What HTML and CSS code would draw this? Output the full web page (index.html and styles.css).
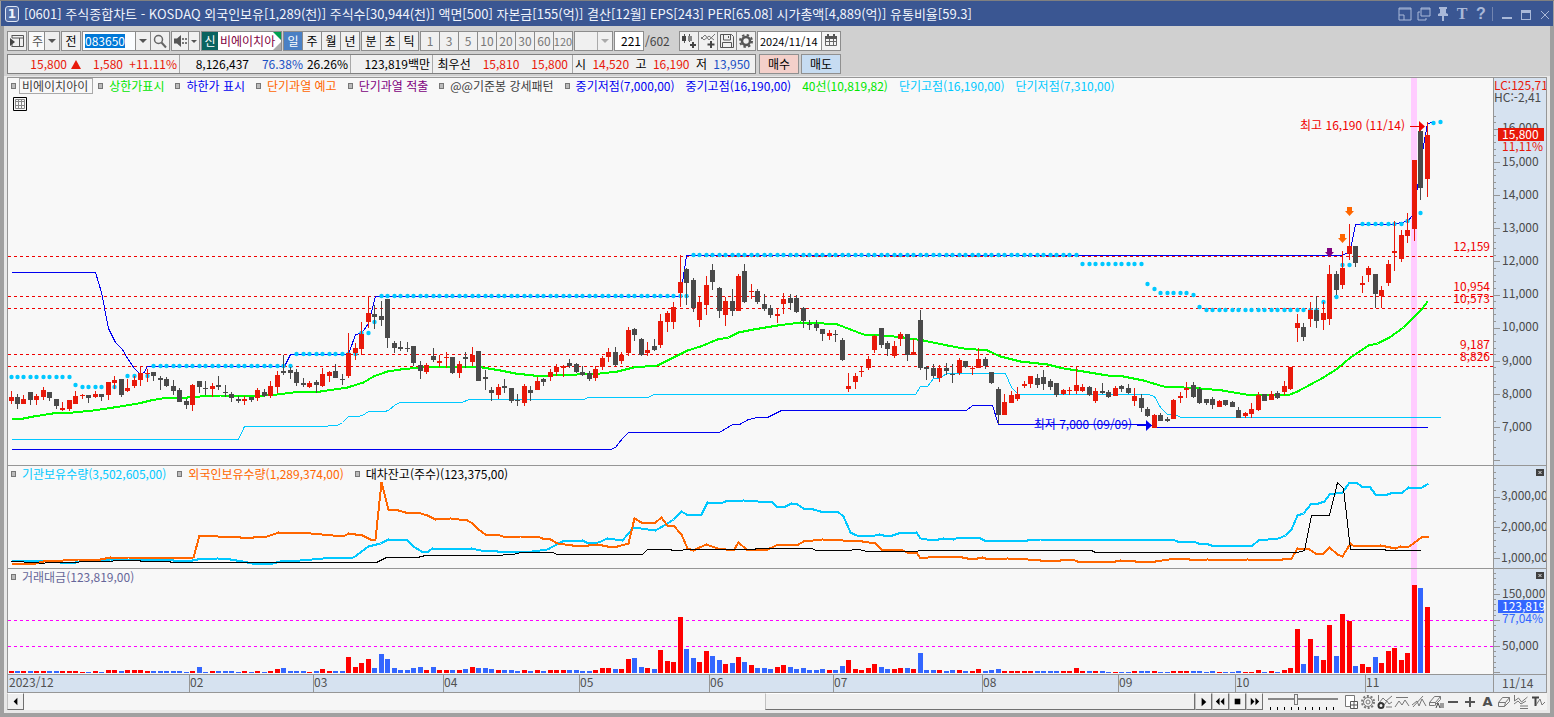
FILE: index.html
```html
<!DOCTYPE html>
<html lang="ko">
<head>
<meta charset="utf-8">
<title>[0601] 주식종합차트</title>
<link rel="stylesheet" href="styles.css">
</head>
<body>
<div class="window">
  <header class="titlebar">
    <span class="win-no">1</span>
    <h1 class="title">[0601] 주식종합차트 - KOSDAQ 외국인보유[1,289(천)] 주식수[30,944(천)] 액면[500] 자본금[155(억)] 결산[12월] EPS[243] PER[65.08] 시가총액[4,889(억)] 유통비율[59.3]</h1>
    <div class="win-buttons">
      <button aria-label="화면 분할"><svg viewBox="0 0 14 14"><path d="M1 1h12v12H1zM1 8h5v5M1 2h12" fill="none" stroke="currentColor"/></svg></button>
      <button aria-label="복사"><svg viewBox="0 0 14 14"><path d="M4 1h9v8H4zM4 2h9M3 5H1v8h8v-2" fill="none" stroke="currentColor"/></svg></button>
      <button aria-label="고정"><svg viewBox="0 0 14 14"><path d="M3 0h8v2h-1v4l2 1v2H8v5H6V9H2V7l2-1V2H3z" fill="currentColor"/></svg></button>
      <button aria-label="글꼴" class="glyph">T</button>
      <button aria-label="도움말" class="glyph q">?</button>
      <i class="split"></i>
      <button aria-label="최소화"><svg viewBox="0 0 14 14"><path d="M2 10h10v2H2z" fill="currentColor"/></svg></button>
      <button aria-label="최대화"><svg viewBox="0 0 14 14"><path d="M2 3h10v10H2z M3 6v6h8V6z" fill="currentColor" fill-rule="evenodd"/></svg></button>
      <button aria-label="닫기"><svg viewBox="0 0 14 14"><path d="M3 4l8 8M11 4l-8 8" stroke="currentColor"/></svg></button>
    </div>
  </header>

  <div class="frame">
    <div class="toolbar">
      <div class="row">
        <div class="group"><button class="tool" aria-label="종목창"><svg viewBox="0 0 16 16"><path d="M3 2.5h11.500v11H3M3 2v3M3 11v3M3 5h11M10.500 5v9" fill="none" stroke="#555"/><path d="M1 5l5 4-5 4z" fill="#444"/></svg></button></div>
        <div class="group combo kind"><select aria-label="구분"><option>주</option></select><span class="arrow"></span></div>
        <div class="group"><button class="tool">전</button></div>
        <div class="group combo code"><input type="text" id="code" aria-label="종목코드" value="083650"><span class="arrow"></span><button class="tool" aria-label="검색"><svg viewBox="0 0 16 16"><circle cx="6.500" cy="6.500" r="4" fill="none" stroke="#666" stroke-width="1.500"/><path d="M9.500 9.500l4.500 5" stroke="#666" stroke-width="2"/></svg></button></div>
        <div class="group"><button class="tool speaker" aria-label="음성"><svg viewBox="0 0 16 16"><path d="M2 5.500h3L9 2v12l-4-3.500H2z" fill="#555"/><path d="M11 5v6M14 5v6" stroke="#777" stroke-width="2" stroke-dasharray="2 2"/></svg></button><span class="arrow narrow"></span></div>
        <div class="group stock"><span class="margin">신</span><span class="name">비에이치아</span></div>
        <div class="group periods"><button class="tool on">일</button><button class="tool">주</button><button class="tool">월</button><button class="tool">년</button></div>
        <div class="group periods"><button class="tool">분</button><button class="tool">초</button><button class="tool">틱</button></div>
        <div class="group minutes"><button class="tool">1</button><button class="tool">3</button><button class="tool">5</button><button class="tool">10</button><button class="tool">20</button><button class="tool">30</button><button class="tool">60</button><button class="tool">120</button></div>
        <div class="group combo blank"><select aria-label="사용자 주기" disabled><option></option></select><span class="arrow off"></span></div>
        <div class="group count"><input type="text" aria-label="조회 봉수" value="221"></div>
        <span class="total">/602</span>
        <div class="group icons">
          <button class="tool" aria-label="종목 추가"><svg viewBox="0 0 16 16"><path d="M3.500 1v9M8.500 1v8" stroke="#555"/><path d="M1 3h4v5H1z" fill="#444"/><path d="M7 3h4v5H7z" fill="#888"/><path d="M12 9v6M9 12h6" stroke="#444" stroke-width="2"/></svg></button>
          <button class="tool" aria-label="지표 추가"><svg viewBox="0 0 16 16"><path d="M1 6l4-4 4 5 6-6M1 4l3 3 5-4 5 4" fill="none" stroke="#777"/><path d="M11 8v7M7.500 11.500h7" stroke="#444" stroke-width="2"/></svg></button>
          <button class="tool" aria-label="저장"><svg viewBox="0 0 16 16"><path d="M1.500 1.500h11l2 2v11h-13zM4.500 2v5h7V2M3.500 14V9.500h9V14M9.500 3v2" fill="none" stroke="#555"/></svg></button>
          <button class="tool" aria-label="설정"><svg viewBox="0 0 16 16"><circle cx="8" cy="8" r="4" fill="none" stroke="#555" stroke-width="2.500"/><circle cx="8" cy="8" r="6" fill="none" stroke="#555" stroke-width="2" stroke-dasharray="2.400 2.310"/></svg></button>
        </div>
        <div class="group date"><input type="text" aria-label="기준일" value="2024/11/14"><button class="tool" aria-label="달력"><svg viewBox="0 0 16 16"><path d="M2.500 3.500h11v9h-11zM6.500 4v8M10.500 4v8M3 8.500h10" fill="none" stroke="#666"/><path d="M2 3h12v3H2zM4 1h2v3H4zM10 1h2v3h-2z" fill="#555"/></svg></button></div>
      </div>

      <div class="row">
        <div class="quote">
          <div class="cell c1 up"><span>15,800</span><i class="tri"></i><span class="diff">1,580</span><span class="rate">+11.11%</span></div>
          <div class="cell c2"><span>8,126,437</span><span class="down turn">76.38%</span><span class="share">26.26%</span></div>
          <div class="cell c3"><span>123,819백만</span></div>
          <div class="cell c4"><span>최우선</span><span class="up">15,810</span><span class="up">15,800</span></div>
          <div class="cell c5"><span>시</span><span class="up">14,520</span><span>고</span><span class="up">16,190</span><span>저</span><span class="down">13,950</span></div>
        </div>
        <button class="order buy">매수</button>
        <button class="order sell">매도</button>
      </div>
    </div>

    <main class="workspace">
      <section class="chart">
        <div class="pane" id="price">
          <svg class="plot"></svg>
          <div class="legend">
            <span class="key gray"><span class="boxed">비에이치아이</span></span>
            <span class="key lime">상한가표시</span>
            <span class="key blue">하한가 표시</span>
            <span class="key orange">단기과열 예고</span>
            <span class="key purple">단기과열 적출</span>
            <span class="key gray">@@기준봉 강세패턴</span>
            <span class="key blue">중기저점(7,000,00)</span>
            <span class="blue">중기고점(16,190,00)</span>
            <span class="lime">40선(10,819,82)</span>
            <span class="cyan">단기고점(16,190,00)</span>
            <span class="cyan">단기저점(7,310,00)</span>
          </div>
          <button class="grid-btn" aria-label="데이터 표"><svg viewBox="0 0 14 14"><path d="M.500.500h13v13H.500z" fill="#f8f8f8" stroke="#000"/><path d="M2.500 2.500h9v9h-9zM5.500 2v10M8.500 2v10M2 4.500h10M2 8.500h10" fill="none" stroke="#888"/></svg></button>
        </div>
        <div class="axis"><svg class="scale"></svg></div>

        <div class="pane" id="holding">
          <svg class="plot"></svg>
          <div class="legend">
            <span class="key cyan">기관보유수량(3,502,605,00)</span>
            <span class="key orange">외국인보유수량(1,289,374,00)</span>
            <span class="key black">대차잔고(주수)(123,375,00)</span>
          </div>
        </div>
        <div class="axis"><svg class="scale"></svg><button class="close" aria-label="보유수량 닫기"><svg viewBox="0 0 8 7"><path d="M2.500 2l3 3M5.500 2l-3 3" stroke="#ddd"/></svg></button></div>

        <div class="pane" id="volume">
          <svg class="plot"></svg>
          <div class="legend"><span class="key slate">거래대금(123,819,00)</span></div>
        </div>
        <div class="axis"><svg class="scale"></svg><button class="close" aria-label="거래대금 닫기"><svg viewBox="0 0 8 7"><path d="M2.500 2l3 3M5.500 2l-3 3" stroke="#ddd"/></svg></button></div>

        <div class="time" id="time"><svg class="plot"></svg></div>
        <div class="time today">11/14</div>
      </section>

      <footer class="footer">
        <button class="nav" aria-label="왼쪽"><svg viewBox="0 0 16 16"><path d="M10 4v8L6 8z"/></svg></button>
        <div class="track"><div class="thumb"></div></div>
        <button class="nav" aria-label="오른쪽"><svg viewBox="0 0 16 16"><path d="M6 4v9l5-4.500z"/></svg></button>
        <button class="nav" aria-label="빠르게 뒤로"><svg viewBox="0 0 16 16"><path d="M7 4v8L3 8zM12 4v8L8 8z"/></svg></button>
        <button class="nav" aria-label="정지"><svg viewBox="0 0 16 16"><path d="M5 5h6v6H5z"/></svg></button>
        <button class="nav" aria-label="빠르게 앞으로"><svg viewBox="0 0 16 16"><path d="M4 4v8l4-4zM9 4v8l4-4z"/></svg></button>
        <input type="range" class="speed" aria-label="재생 속도" min="0" max="10" value="4">
        <div class="draw">
          <button aria-label="화면 추가"><svg viewBox="0 0 16 16"><path d="M2.500 1.500h9v11h-9z" fill="#fff"/><path d="M7.500 7.500h7v7h-7zM11 8v6M8 11h6" fill="#fff" stroke="#555"/></svg></button>
          <button aria-label="설정"><svg viewBox="0 0 16 16"><circle cx="8" cy="8" r="2"/><circle cx="8" cy="8" r="4.500"/><circle cx="8" cy="8" r="6" stroke-width="2" stroke-dasharray="2 1.770"/></svg></button>
          <button aria-label="지표 설정"><svg viewBox="0 0 16 16"><path d="M1.500 1v6M2 9l4-5 3 3 6-5M7 11l3-4 2 3 3-2M9 13h6"/><circle cx="4" cy="11.500" r="2.500" stroke="#333" stroke-width="2"/></svg></button>
          <button aria-label="수평선"><svg viewBox="0 0 16 16"><path d="M2 3.500h12M1 13l4-6 3 4 3-5 4 6"/></svg></button>
          <button aria-label="추세선"><svg viewBox="0 0 16 16"><path d="M2 13L12 2M1 11l5-4 2 5 3-7 4 7"/></svg></button>
          <button aria-label="전체 지우기"><svg viewBox="0 0 16 16"><path d="M1.500 8.500l5-6h6l-5 6zM1.500 8.500v3h5l6-6v-3M7.500 8.500v3"/><path d="M8 14l2-5 2 5M13 9v5M15 9v5" stroke="#444"/></svg></button>
          <button aria-label="축소"><svg viewBox="0 0 16 16"><path d="M3 8h10" stroke="#555" stroke-width="2"/></svg></button>
          <button aria-label="확대"><svg viewBox="0 0 16 16"><path d="M3 8h10M8 3v10" stroke="#555" stroke-width="2"/></svg></button>
          <button aria-label="자동" class="letter">A</button>
          <button aria-label="지우개"><svg viewBox="0 0 16 16"><path d="M2.500 8.500l4-5h7l-4 5zM2.500 8.500v4h6l5-5v-4M9.500 8.500l-1 4"/></svg></button>
          <button aria-label="분석"><svg viewBox="0 0 16 16"><path d="M1.500 1v6l4-3 3 4 6-5M1 10l4-3 3 3 5-3M7 12h8M7 14.500h8"/></svg></button>
          <button aria-label="글자 입력"><svg viewBox="0 0 16 16"><path d="M2 3.500h7M5.500 3v9" stroke="#444" stroke-width="2"/><path d="M6 11l4-6 2 6 3-3"/></svg></button>
        </div>
      </footer>
    </main>
  </div>
</div>
<script src="chart.js"></script>
</body>
</html>
```

FILE: styles.css
```css
*, *::before, *::after { box-sizing: border-box; }

body {
  margin: 0;
  font: 12px/14px "Noto Sans CJK KR", "Liberation Sans", sans-serif;
  color: #000;
  overflow: hidden;
}

button, input, select {
  font: inherit;
  color: inherit;
  margin: 0;
  padding: 0;
  border: 0;
  border-radius: 0;
  background: none;
  outline: 0;
}

svg { display: block; }

.window {
  height: 100vh;
  display: flex;
  flex-direction: column;
  border-top: 1px solid #808080;
  background: #a0a0a0;
}

/* title bar */
.titlebar {
  flex: none;
  height: 25px;
  margin: 0 1px;
  padding: 0 1px 0 4px;
  display: flex;
  align-items: center;
  background: #3a5692;
  color: #f0f4fc;
}
.win-no {
  width: 14px;
  height: 16px;
  border: 1px solid #e0e6f4;
  border-radius: 3px;
  background: #5670a8;
  font: bold 12px/14px "DejaVu Sans", sans-serif;
  text-align: center;
}
.title {
  flex: 1;
  margin: 0 0 0 5px;
  font-size: 13px;
  line-height: 20px;
  font-weight: 400;
  white-space: nowrap;
}
.win-buttons {
  display: flex;
  align-items: center;
  gap: 5px;
  color: #a9b8d8;
}
.win-buttons button { width: 14px; height: 14px; }
.win-buttons .glyph { font: bold 16px/14px "Liberation Serif", serif; }
.win-buttons .q { font-family: "Liberation Sans", sans-serif; }
.split { width: 1px; height: 14px; background: #7285b0; margin: 0 2px 0 -1px; }

.frame {
  flex: 1;
  min-height: 0;
  display: flex;
  flex-direction: column;
  border: solid #a0a0a0;
  border-width: 0 4px 4px;
}

/* tool bar */
.toolbar {
  flex: none;
  display: flex;
  flex-direction: column;
  gap: 3px;
  padding: 5px 3px 2px;
  background: #d0d0d0;
}
.row { display: flex; gap: 1px; height: 20px; white-space: nowrap; }
.group {
  flex: none;
  display: flex;
  border: 1px solid #8c8c8c;
  background: #f0f0f0;
}
.tool {
  width: 18px;
  display: flex;
  align-items: center;
  justify-content: center;
}
.tool svg { width: 16px; height: 16px; }
.group > * + * { border-left: 1px solid #8c8c8c; }
.arrow {
  width: 15px;
  display: flex;
  align-items: center;
  justify-content: center;
}
.arrow::before {
  content: "";
  border: 4px solid transparent;
  border-top: 4px solid #555;
  border-bottom: 0;
}
.arrow.narrow { width: 11px; }
.arrow.narrow::before { border-width: 3px 3px 0; }
.arrow.off::before { border-top-color: #aaa; }
.group select, .group input { appearance: none; min-width: 0; flex: 1; }
.kind { width: 32px; background: #fafafa; }
.kind select { padding-left: 3px; color: #555; }
.kind .arrow { background: #eee; }
.code { width: 88px; }
.code input { background: #fbfdff; padding-left: 2px; }
.code .tool { width: 19px; background: #f0f0f0; }
.code input::selection { background: #0078d7; color: #fff; }
.tool.speaker { width: 16px; }
.stock { width: 81px; overflow: hidden; background: #fff; position: relative; }
.margin { width: 16px; background: #0a6460; color: #fff; text-align: center; line-height: 17px; }
.stock .name { border: 0; padding-left: 2px; color: #800040; line-height: 17px; }
.stock::before, .stock::after {
  content: "";
  position: absolute;
  right: 0;
  border: 4px solid transparent;
}
.stock::before { top: 0; border-color: #00a050 #00a050 transparent transparent; }
.stock::after { bottom: 0; border-color: transparent #aaa #aaa transparent; }
.periods .tool + .tool { width: 19px; }
.periods .on { background: #4a80c4; color: #fff; }
.minutes { color: #777; }
.minutes .tool + .tool { width: 19px; }
.minutes .tool:last-child { font-size: 11px; }
.blank { width: 39px; }
.group.blank .arrow { border-color: #aaa; }
.count { width: 30px; background: #fff; }
.count input { text-align: right; padding-right: 2px; }
.total { width: 33px; line-height: 19px; color: #444; }
.icons .tool + .tool { width: 19px; }
.date { width: 84px; background: #fff; }
.date input { padding-left: 2px; font-size: 11px; }
.date .tool { width: 19px; background: #f4f4f4; }

/* quote bar */
.quote {
  flex: none;
  display: flex;
  width: 749px;
  margin-right: 2px;
  border: 1px solid #808080;
  background: #f0f0f0;
  line-height: 18px;
}
.cell { display: flex; justify-content: flex-end; padding: 0 2px; border-right: 1px solid #a8a8a8; }
.c1 { width: 172px; }
.c2 { width: 171px; }
.c3 { width: 82px; }
.c4 { width: 140px; gap: 12px; padding-right: 4px; }
.c5 { flex: 1; border: 0; justify-content: space-between; padding-right: 5px; }
.tri {
  align-self: center;
  margin-left: 4px;
  border: 5px solid transparent;
  border-top: 0;
  border-bottom: 9px solid #e8190a;
}
.diff { width: 42px; text-align: right; }
.rate { width: 54px; text-align: right; }
.turn { width: 54px; text-align: right; }
.share { width: 45px; text-align: right; }
.up { color: #e8190a; }
.down { color: #1a4fc4; }
.order { width: 40px; border: 1px solid #909090; margin-right: 1px; }
.buy { background: #f4d0ca; }
.sell { background: #c6dcf2; }

/* chart */
.workspace {
  flex: 1;
  min-height: 0;
  display: flex;
  flex-direction: column;
  padding: 1px 3px 3px;
  background: #e8e8e8;
}
.chart {
  flex: 1;
  min-height: 0;
  display: grid;
  grid-template-columns: minmax(0, 1fr) 53px;
  grid-template-rows: minmax(0, 388fr) minmax(0, 103fr) minmax(0, 105fr) 19px;
  border: 1px solid #969696;
  border-bottom: 0;
}
.pane, .axis { position: relative; overflow: hidden; border-bottom: 1px solid #969696; }
.pane { background: #f8f8f8; }
#volume, #volume + .axis { border-bottom: 0; }
.axis, .time { background: #d6e2f0; }
.axis, .today { border-left: 1px solid #969696; }
.plot, .scale { width: 100%; height: 100%; }
.time { border-top: 1px solid #969696; border-bottom: 1px solid #969696; color: #505050; overflow: hidden; }
.today { padding-left: 8px; line-height: 16px; }

svg text { font: 12px "Noto Sans CJK KR", "Liberation Sans", sans-serif; }

.legend {
  position: absolute;
  top: 1px;
  left: 3px;
  display: flex;
  gap: 11px;
  line-height: 14px;
  white-space: nowrap;
}
.key { display: flex; align-items: center; gap: 6px; }
.key::before { content: ""; width: 5px; height: 6px; border: 1px solid #777; background: #bbb; }
.boxed {
  margin: -1px -6px -1px -3px;
  padding: 0 4px 0 2px;
  border: 1px solid #aaa;
}
.lime { color: #00e600; }
.blue { color: #0000f0; }
.orange { color: #ff6600; }
.purple { color: #800080; }
.gray { color: #404040; }
.cyan { color: #00c8ff; }
.black { color: #000; }
.slate { color: #666699; }
.grid-btn { position: absolute; left: 5px; top: 19px; width: 14px; height: 14px; }
.close {
  position: absolute;
  right: 2px;
  top: 3px;
  width: 8px;
  height: 7px;
  background: #404040;
}

/* scroll bar and drawing tools */
.footer {
  flex: none;
  display: flex;
  height: 17px;
  background: #f2f2f2;
}
.nav {
  flex: none;
  width: 17px;
  border: 1px solid;
  border-color: #fff #707070 #707070 #c0c0c0;
  background: #f0f0f0;
}
.nav svg { width: 15px; height: 15px; }
.track { flex: 1; display: flex; justify-content: flex-end; background: #f6f6f6; }
.thumb { width: 36.7%; border: 1px solid; border-color: #fff #707070 #707070 #c0c0c0; background: #f0f0f0; }
.speed {
  appearance: none;
  flex: none;
  width: 70px;
  height: 17px;
  margin: 0 5px;
  background:
    linear-gradient(#888, #888) 0 5px / 100% 2px no-repeat,
    repeating-linear-gradient(90deg, #000 0 1px, transparent 1px 7px) 2px 14px / 66px 3px no-repeat;
}
.speed::-webkit-slider-thumb {
  appearance: none;
  width: 4px;
  height: 11px;
  margin-top: -5px;
  background: #f0f0f0;
  border: 1px solid #777;
}
.draw { flex: none; display: flex; }
.draw button { width: 17px; }
.draw svg { width: 16px; height: 16px; fill: none; stroke: #777; }
.draw .letter { font: bold 13px/17px "DejaVu Sans", sans-serif; color: #505050; }
```

FILE: chart.js
```js
// Daily bars: colour (R rise, K fall), then the heights of high, body top, body bottom and low.
const CANDLES = `R391,397,401,404 K394,397,404,409 R395,399,404,404 K392,392,400,405 R394,396,400,405 R387,390,397,400
K392,392,398,401 K399,399,406,409 R402,408,410,411 R400,400,409,411 R391,396,404,404 R394,395,396,399 K395,395,398,403
R391,394,397,398 K394,394,397,401 R382,382,395,400 R376,380,383,389 K379,379,395,397 R379,388,391,392 R376,380,386,388
R366,373,380,386 R369,373,374,382 K372,372,376,381 K376,378,380,390 K377,379,386,387 K380,386,391,395 K388,390,402,402
K399,401,405,409 R384,385,405,411 K381,381,387,393 K381,388,389,395 R383,386,389,397 K376,385,387,390 K385,392,393,397
K392,394,398,402 K396,399,401,403 R396,399,401,405 K397,397,400,402 R388,390,398,401 K389,392,396,397 R381,386,396,398
R371,375,387,393 K355,371,373,375 K367,370,373,379 K369,372,383,386 K378,383,385,387 R381,383,387,388 K380,382,385,393
R368,374,386,387 R371,372,376,382 K364,371,378,378 K374,379,380,385 R333,353,376,378 R343,348,353,360 R322,334,349,355
R296,313,322,328 K305,314,317,329 K301,316,320,326 K299,299,338,348 K341,343,348,353 K341,347,349,351 K342,348,349,352
K346,346,363,366 K361,365,371,379 R363,365,372,374 K348,356,360,362 R355,361,363,367 R352,357,358,368 K357,357,373,374
R361,364,373,378 K352,357,359,368 R347,355,362,366 K351,351,381,381 K370,377,379,390 K387,390,393,401 R384,387,395,399
K379,386,388,393 K388,388,401,403 K394,400,401,406 R384,386,403,406 K386,390,393,401 R377,381,390,390 K378,379,382,386
R369,372,377,381 R364,367,372,376 R365,366,368,377 K359,363,366,368 K363,364,372,373 K366,372,375,376 K371,373,379,381
R366,369,378,381 R356,358,367,370 R348,352,357,362 K347,352,365,366 R352,355,361,364 R327,330,353,356 K328,329,335,341
K338,339,355,356 R342,350,353,356 K339,346,350,351 R314,321,345,348 R311,313,322,332 R302,307,322,329 R255,282,293,307
K268,269,283,305 K278,280,308,312 R296,302,320,327 R276,285,305,315 K264,270,282,290 K287,288,311,318 R297,301,315,326
K289,301,311,316 R274,276,311,311 K264,271,302,303 R284,291,292,299 K289,291,302,304 K294,304,309,311 K305,308,315,318
R308,314,316,323 R293,299,304,314 K294,298,303,310 K295,298,312,313 K307,308,321,328 K320,324,325,330 K320,324,328,331
K329,329,334,341 R330,333,336,340 K330,334,335,342 K338,340,360,361 R373,386,389,392 R373,376,382,389 R366,371,372,377
R356,359,368,370 R335,336,350,353 K328,328,345,348 K341,343,349,356 R341,346,356,358 R332,334,339,346 K334,334,355,361
R339,352,355,355 K310,320,368,370 K366,367,369,380 K364,368,376,378 R365,368,378,382 K363,368,371,375 K364,374,375,383
R358,360,373,375 K361,361,367,368 R366,368,369,375 R348,359,368,368 K357,359,366,369 K372,372,383,384 K387,389,415,424
R394,402,415,415 R391,395,403,403 R387,394,399,401 R381,384,386,388 R376,376,384,388 K374,378,385,388 K370,377,384,390
K379,381,387,390 K383,383,395,397 R389,390,394,395 R387,390,391,395 R366,385,391,394 R384,387,391,392 K386,387,395,396
R388,391,401,403 K383,391,393,394 K390,392,397,398 R386,388,396,396 K385,386,389,392 K384,388,393,394 R388,396,401,406
K394,398,408,412 K407,409,416,417 R414,415,428,428 K413,415,421,421 K417,419,421,422 R399,400,419,419 R392,396,398,403
R382,388,390,398 K382,385,397,398 K387,389,403,404 K399,399,403,405 K397,399,405,409 R400,401,407,407 K400,400,405,406
K401,402,407,407 K407,410,418,418 R412,413,416,418 R403,409,414,418 R392,395,410,411 K394,394,401,401 R391,394,400,400
K391,393,398,399 R381,386,392,395 R367,367,389,390 R314,323,328,342 K323,327,337,341 R302,310,319,327 K296,310,321,328
R302,313,320,330 R265,274,319,325 K271,274,290,295 R251,268,285,289 R224,246,254,260 K246,246,263,267 R276,283,285,293
R266,268,275,282 K274,274,294,308 R286,290,296,308 R260,264,283,286 R221,251,253,271 R230,235,259,262 R213,230,236,243
R160,160,229,241 K125,131,188,200 R122,135,179,197`.split(/\s+/);

// Turnover bars: colour and height.
const TURNOVER = `R2 B2 R2 B2 R2 R2 B2 B2 R2 R2 R2 R1 B1 R2 B1 R3 R3 B2 R3 R3 R3 R2 B2 B2 B2 B2 B2 B1 R2 B6 B1 R2 B2 B2 B2 B1 R2 B1 R2 B1
R2 R4 B5 B2 B2 B2 R1 B2 R4 R2 B2 B2 R16 R6 R10 R14 B5 B19 B14 B5 B3 B3 B5 B6 R3 B6 R3 R3 B3 R3 B4 R6 B5 B5 B4 R3 B3 B3 B2 R3
B2 R3 B2 R3 R3 R3 B3 B3 B2 B2 R3 R5 R5 B4 R4 R14 B15 B6 R5 B4 R23 R12 R11 R56 B24 B15 R11 R22 B17 B13 R9 B10 R16 B11 R8 B5 B5 B4 R6 R8
B6 B4 B5 B3 B3 B4 R3 B3 B7 R13 R4 R3 R5 R9 B6 B4 R4 R5 B5 R4 B20 B3 B3 R3 B2 B3 R3 B2 R2 R4 B2 B3 B4 R2 R2 R2 R2 R2 B2 B2
B2 B2 R2 R2 R5 R2 B2 R2 B2 B1 R1 B1 B1 R2 B2 B2 R2 B1 B1 R2 R2 R2 B2 B2 B1 B2 R1 B1 B1 B2 R1 R1 R3 B1 R2 B1 R3 R5 R44 B9
R34 B17 R13 R48 B17 R59 R52 B7 R9 R6 B16 R10 R22 R25 R13 R20 R88 B85 R66`.split(/\s+/);

// Short-term high markers: first bar, last bar, height.
const DOTS = [[0,9,377],[10,10,385],[11,14,387],[16,16,387],[18,19,376],[21,21,376],[22,43,366],[44,53,354],[54,55,333],[56,56,322],
  [57,104,296],[105,164,255],[165,174,264],[175,175,284],[176,176,289],[177,181,293],[182,182,295],[183,183,307],[184,201,310],
  [202,202,302],[204,204,297],[205,206,265],[208,214,224],[215,215,221],[217,217,213],[219,219,123],[220,220,122]];

const MID_HIGH = "11,272 95,272 101,292 108,328 115,342 122,349 127,358 134,368 140,374 143,373 147,366 284,366 290,354 348,354 355,334 361,333 368,323 375,296 680,296 682,282 686,255 1341,255 1348,252 1351,244 1355,224 1393,224 1400,222 1407,221 1412,215 1417,187 1423,145 1427,123 1432,122";
const MID_LOW = "11,449 610,449 615,447 622,438 628,432 719,432 732,424 739,424 748,419 757,417 767,417 777,412 781,410 966,410 972,405 992,405 998,424 1150,424 1155,427 1427,427";
const SHORT_LOW = "11,439 238,439 244,426 318,426 337,425 342,422 348,416 357,416 362,415 368,411 384,411 388,410 395,404 400,402 461,402 469,399 583,399 588,397 648,397 653,394 915,394 920,386 927,386 933,378 939,378 946,373 1005,373 1011,387 1018,394 1148,394 1154,396 1160,407 1167,414 1175,414 1180,417 1440,417";
const MA40 = "11,418 23,418 33,416 52,413 73,412 93,410 113,407 138,403 150,400 167,397 187,397 200,396 220,395 240,395 253,396 277,394 300,391 320,391 347,387 363,382 373,376 387,371 400,369 420,367 450,366 482,367 500,370 515,373 533,375 550,375 577,374 600,373 617,371 633,367 657,365 673,357 687,350 700,346 717,339 728,337 738,332 753,329 777,325 800,322 823,323 837,324 850,329 863,334 883,335 903,337 923,340 947,345 963,348 987,350 1000,356 1020,361 1047,364 1063,368 1077,370 1107,375 1123,376 1143,380 1163,386 1183,387 1200,388 1222,390 1245,394 1287,395 1297,391 1310,384 1323,377 1337,368 1350,357 1368,345 1377,343 1389,337 1403,327 1413,317 1422,308 1427,301";
const INSTITUTION = "11,560 40,560 60,562 75,562 82,560 110,559 133,559 153,559 173,560 192,560 197,559 217,558 230,559 242,561 252,563 272,563 280,561 300,560 323,558 353,557 368,546 380,543 388,539 407,540 413,546 421,551 428,551 432,548 463,549 471,548 480,550 497,551 520,551 532,551 547,549 562,541 582,540 588,543 598,542 607,538 622,540 633,527 655,530 667,523 673,519 681,511 686,514 701,514 707,502 720,503 725,501 743,500 772,502 776,506 785,506 791,503 797,504 803,508 813,509 820,511 837,511 843,516 850,532 856,535 870,536 879,534 883,535 892,535 898,533 916,532 920,538 933,540 943,538 953,539 958,537 978,537 984,540 1027,540 1040,539 1172,539 1177,541 1193,541 1198,543 1205,543 1211,545 1252,545 1258,540 1278,538 1285,535 1291,529 1297,515 1303,513 1311,503 1318,503 1324,501 1329,494 1342,492 1349,482 1356,482 1361,486 1369,486 1375,494 1387,494 1390,493 1402,492 1408,487 1420,488 1428,483";
const FOREIGN = "11,563 35,563 43,561 63,560 78,559 100,559 110,557 115,558 128,557 160,557 170,558 193,557 199,535 210,535 217,536 240,537 253,537 267,536 278,532 310,533 343,536 348,533 362,535 370,539 375,539 381,482 388,509 398,510 405,512 417,512 427,515 435,519 450,518 467,520 472,523 478,529 485,534 497,534 505,537 520,536 537,536 542,538 550,539 557,543 572,545 588,545 597,544 607,546 617,546 628,543 634,518 641,522 655,522 661,517 667,525 673,525 681,534 687,548 693,550 699,547 706,544 717,548 733,550 738,542 746,549 767,549 778,544 798,544 803,541 822,539 862,541 875,543 881,549 900,549 907,552 916,552 920,558 935,556 957,556 967,558 977,558 982,557 988,559 1007,558 1027,559 1040,560 1060,560 1065,559 1072,559 1077,561 1115,561 1120,560 1135,561 1155,561 1175,558 1185,558 1193,560 1207,559 1237,560 1247,559 1273,560 1291,558 1297,548 1309,549 1315,553 1323,553 1329,547 1337,554 1342,556 1350,543 1354,546 1380,545 1395,548 1400,546 1407,547 1413,543 1422,536 1428,536";
const LENDING = "11,561 35,562 42,563 48,562 110,561 115,560 137,560 143,561 167,561 173,562 376,562 386,557 417,557 425,555 493,555 513,554 520,552 552,552 557,554 642,554 647,549 670,549 672,550 682,550 683,549 753,549 757,548 812,548 815,550 845,550 858,549 867,551 917,551 918,550 1091,550 1095,552 1297,552 1304,550 1311,515 1329,515 1337,482 1343,488 1350,549 1383,549 1387,550 1420,550";

const LEVELS = [[256, "12,159"], [296, "10,954"], [308, "10,573"], [354, "9,187"], [366, "8,826"]];
const MONTHS = [[189, "02"], [313, "03"], [443, "04"], [579, "05"], [709, "06"], [833, "07"], [982, "08"], [1118, "09"], [1235, "10"], [1365, "11"]];
const RED = "#e8190a", DARK = "#4a4a4a", LINE = "#969696";

// Maps chart units to the current size of an svg and collects its markup.
function surface(svg, x0, y0, w, h) {
  const sx = svg.clientWidth / w, sy = svg.clientHeight / h;
  const X = x => (x - x0) * sx, Y = y => (y - y0) * sy;
  let out = "";
  return {
    rect(x, y, rw, rh, fill) {
      out += `<rect x="${X(x)}" y="${Y(y)}" width="${rw * sx}" height="${rh * sy}" fill="${fill}" shape-rendering="crispEdges"/>`;
    },
    line(points, stroke, width = 1) {
      const p = points.split(" ").map(s => { const [a, b] = s.split(",").map(Number); return X(a + .5) + "," + Y(b + .5); });
      out += `<polyline points="${p.join(" ")}" fill="none" stroke="${stroke}" stroke-width="${width}" shape-rendering="crispEdges"/>`;
    },
    dashed(y, stroke) {
      out += `<path d="M0 ${Y(y + .5)}H${X(x0 + w)}" stroke="${stroke}" stroke-dasharray="3 3" shape-rendering="crispEdges"/>`;
    },
    dot(x, y) { out += `<circle cx="${X(x)}" cy="${Y(y)}" r="2.200" fill="#00c8ff"/>`; },
    shape(x, y, d, fill) { out += `<path transform="translate(${X(x)} ${Y(y)})" d="${d}" fill="${fill}"/>`; },
    text(x, y, s, fill, anchor = "start") {
      out += `<text x="${X(x)}" y="${Y(y)}" fill="${fill}" text-anchor="${anchor}">${s}</text>`;
    },
    done() { svg.innerHTML = out; }
  };
}

const barX = i => Math.floor(11 + i * 6.4955);

function drawPrice(pane) {
  const s = surface(pane.querySelector(".plot"), 8, 78, 1485, 387);
  s.rect(1411, 78, 6, 387, "#ffccff");
  LEVELS.forEach(([y]) => s.dashed(y, "#f00000"));
  s.line(MA40, "#00ff00", 2);
  s.line(SHORT_LOW, "#00c8ff");
  s.line(MID_LOW, "#0000f0");
  s.line(MID_HIGH, "#0000f0");
  DOTS.forEach(([a, b, y]) => { for (let i = a; i <= b; i++) s.dot(barX(i) + .5, y); });
  CANDLES.forEach((c, i) => {
    const [hi, top, bottom, lo] = c.slice(1).split(",").map(Number);
    const fill = c[0] === "R" ? RED : DARK, x = barX(i);
    s.rect(x, hi, 1, lo - hi, fill);
    s.rect(x - 2, top, 5, bottom - top, fill);
  });
  LEVELS.forEach(([y, label]) => s.text(1490, y - 5, label, "#f00000", "end"));
  s.text(1405, 130, "최고 16,190 (11/14)", "#f00000", "end");
  s.rect(1410, 126, 9, 1, "#f00000");
  s.shape(1419, 126, "M0-5L6 .5 0 6z", "#f00000");
  s.text(1132, 429, "최저 7,000 (09/09)", "#0000f0", "end");
  s.rect(1137, 425, 9, 1, "#0000f0");
  s.shape(1146, 425, "M0-5L6 .5 0 6z", "#0000f0");
  const down = "M-2 0h5v4h2l-4.500 5-4.500-5h2z";
  s.shape(1349, 207, down, "#ff6600");
  s.shape(1342, 234, down, "#ff6600");
  s.shape(1329, 248, down, "#800080");
  s.done();

  const a = surface(pane.nextElementSibling.querySelector(".scale"), 1494, 78, 52, 387);
  for (let k = -1; k <= 52; k++) {
    const y = Math.round(460.3 - k * 6.63);
    if (y > 100) a.rect(1494, y, k % 5 === 0 ? 6 : 2, 1, LINE);
  }
  for (let p = 7; p <= 16; p++) a.text(1502, Math.round(431 - (p - 7) * 33.17), p + ",000", DARK);
  a.rect(1498, 128, 46, 13, RED);
  a.text(1502, 139, "15,800", "#fff");
  a.text(1502, 151, "11,11%", RED);
  a.text(1494, 90, "LC:125,71", RED);
  a.text(1494, 102, "HC:-2,41", DARK);
  a.done();
}

function drawHolding(pane) {
  const s = surface(pane.querySelector(".plot"), 8, 466, 1485, 102);
  s.rect(1411, 466, 6, 102, "#ffccff");
  s.line(INSTITUTION, "#00c8ff", 2);
  s.line(FOREIGN, "#ff6600", 2);
  s.line(LENDING, "#000");
  s.done();
  const a = surface(pane.nextElementSibling.querySelector(".scale"), 1494, 466, 52, 102);
  for (let k = 0; k <= 14; k++) a.rect(1494, Math.round(558 - k * 6.15), k % 5 === 0 ? 6 : 2, 1, LINE);
  ["1,000,00", "2,000,00", "3,000,00"].forEach((t, i) => a.text(1501, 562 - i * 31, t, DARK));
  a.done();
}

function drawVolume(pane) {
  const s = surface(pane.querySelector(".plot"), 8, 569, 1485, 105);
  s.rect(1411, 569, 6, 105, "#ffccff");
  s.dashed(620, "#ff00ff");
  s.dashed(646, "#ff00ff");
  TURNOVER.forEach((v, i) => {
    const h = Number(v.slice(1));
    s.rect(barX(i) - 2, 673 - h, 5, h, v[0] === "R" ? "#ff0000" : "#3366ff");
  });
  s.done();
  const a = surface(pane.nextElementSibling.querySelector(".scale"), 1494, 569, 52, 105);
  for (let k = 0; k <= 19; k++) a.rect(1494, Math.round(672 - k * 5.2), k % 5 === 0 ? 6 : 2, 1, LINE);
  a.text(1502, 598, "150,000", DARK);
  a.text(1502, 650, "50,000", DARK);
  a.rect(1498, 600, 46, 13, "#3366ff");
  a.text(1502, 611, "123,819", "#fff");
  a.text(1502, 623, "77,04%", "#3366ff");
  a.done();
}

function drawTime(el) {
  const s = surface(el.querySelector(".plot"), 8, 675, 1485, 17);
  s.text(9, 687, "2023/12", "#505050");
  MONTHS.forEach(([x, label]) => {
    s.rect(x, 675, 1, 17, LINE);
    s.text(x + 1, 687, label, "#505050");
  });
  s.done();
}

function draw() {
  drawPrice(document.getElementById("price"));
  drawHolding(document.getElementById("holding"));
  drawVolume(document.getElementById("volume"));
  drawTime(document.getElementById("time"));
}

draw();
window.addEventListener("resize", draw);
const code = document.getElementById("code");
code.focus();
code.select();
```
